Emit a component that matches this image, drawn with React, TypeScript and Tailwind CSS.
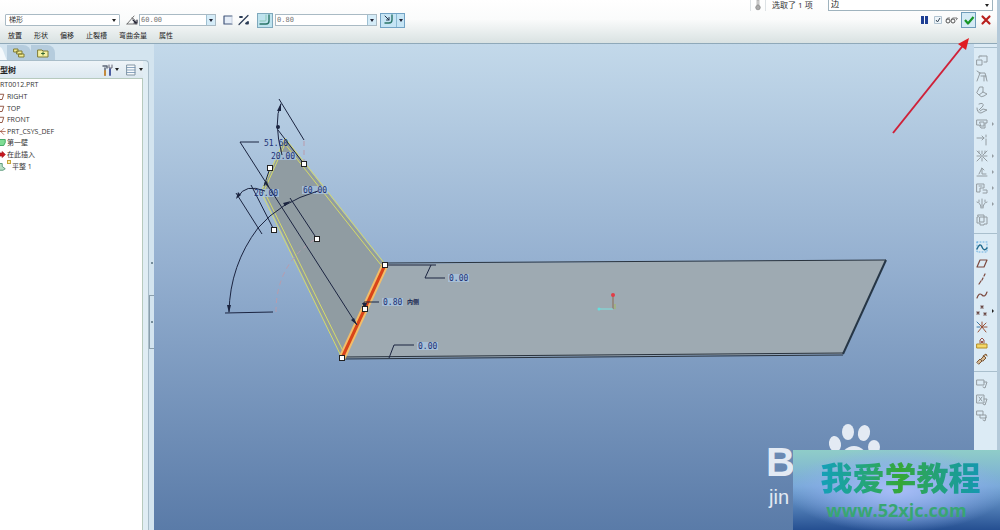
import React, { useState } from 'react';

const ui = "font-['Open_Sans','Noto_Sans_CJK_SC',sans-serif]";

interface IconProps {
  children: React.ReactNode;
  className?: string;
  size?: number;
}

// All the tool glyphs are drawn on a 12 unit grid
const Glyph: React.FC<IconProps> = ({ children, className = '', size = 12 }) => (
  <svg
    width={size}
    height={size}
    viewBox="0 0 12 12"
    fill="none"
    stroke="currentColor"
    strokeLinecap="round"
    strokeLinejoin="round"
    className={`shrink-0 ${className}`}
    aria-hidden="true"
  >
    {children}
  </svg>
);

const Caret = ({ className = '' }: { className?: string }) => (
  <svg width="4" height="3" viewBox="0 0 4 3" className={`shrink-0 ${className}`} aria-hidden="true">
    <path d="M0 0h4L2 3z" fill="currentColor" />
  </svg>
);

interface ComboProps {
  label: string;
  value: string;
  onChange: (value: string) => void;
  className: string;
}

const Combo: React.FC<ComboProps> = ({ label, value, onChange, className }) => (
  <div className={`flex h-3 border border-[#a9bac4] bg-white ${className}`}>
    <input
      aria-label={label}
      value={value}
      onChange={(e) => onChange(e.target.value)}
      className="min-w-0 flex-1 px-px font-['DejaVu_Sans_Mono',monospace] text-[7px] leading-[10px] text-[#777] outline-none"
    />
    <button aria-label={`${label} list`} className="flex w-[9px] items-center justify-center border-l border-[#9fc0d2] bg-[#d5ecf8] text-[#223]">
      <Caret />
    </button>
  </div>
);

const StatusRow = () => {
  const [filter, setFilter] = useState('边');
  return (
    <div className="flex h-[11px] items-end justify-end overflow-hidden pr-1">
      <span className="mr-1 h-[11px] w-px bg-[#dde2e5]" />
      <svg width="6" height="11" viewBox="0 0 6 11" className="mr-1" aria-hidden="true">
        <path d="M2 0h2v5H2z" fill="#ddd" stroke="#999" strokeWidth=".6" />
        <circle cx="3" cy="7.5" r="2.3" fill="#aaa" stroke="#777" strokeWidth=".6" />
      </svg>
      <span className="mr-1.5 h-[11px] w-px bg-[#dde2e5]" />
      <span className="w-14 whitespace-nowrap text-[8px] leading-3 text-[#333]">选取了 1 项</span>
      <div className="relative flex w-[165px] items-center">
        <select
          aria-label="选取过滤器"
          value={filter}
          onChange={(e) => setFilter(e.target.value)}
          className="h-3.5 w-full appearance-none border border-[#9fb3be] bg-white px-0.5 text-[8px] leading-3 text-[#222] outline-none"
        >
          <option>边</option>
          <option>面</option>
        </select>
        <Caret className="pointer-events-none absolute right-1 bottom-1 text-[#222]" />
      </div>
    </div>
  );
};

const Dashboard = () => {
  const [shape, setShape] = useState('梯形');
  const [angle, setAngle] = useState('60.00');
  const [radius, setRadius] = useState('0.80');
  const [preview, setPreview] = useState(true);

  return (
    <div className="flex h-[18px] items-center pr-[5px] pl-[5px]">
      <div className="relative flex w-[115px] items-center">
        <select
          aria-label="形状"
          value={shape}
          onChange={(e) => setShape(e.target.value)}
          className="h-3 w-full appearance-none rounded-[1px] border border-[#a9bac4] bg-white px-[3px] text-[7px] leading-[10px] text-[#333] outline-none"
        >
          <option>梯形</option>
          <option>矩形</option>
        </select>
        <Caret className="pointer-events-none absolute right-1 text-[#222]" />
      </div>
      <Glyph className="ml-1.5 text-[#555]">
        <path d="M1 10h10M1 10 8 2M6 4q4 1 4 6" strokeWidth=".8" />
        <path d="m7 6 3 3M8 9h3V6" stroke="#223" strokeWidth="1.2" />
      </Glyph>
      <Combo label="角度" value={angle} onChange={setAngle} className="ml-px w-[77px]" />
      <button aria-label="草绘" className="ml-1.5">
        <Glyph className="text-[#44587c]"><path d="M10 2H2v8h8" fill="#e5edf7" strokeWidth="1.2" /><path d="M10 3v6" stroke="#c4cddd" /></Glyph>
      </button>
      <button aria-label="反向" className="ml-1">
        <Glyph className="text-[#2b3c55]"><path d="m1 10.500 9-9" strokeWidth="1.200" /><path d="M2 3h2M8 9.500h2V8z" strokeWidth="1.800" /></Glyph>
      </button>
      <button aria-label="折弯半径" className="ml-[7px] flex h-[15px] w-4 items-center justify-center border border-[#7fa9bd] bg-[#bfe3ee]">
        <Glyph className="text-[#2b7568]"><path d="M10 1v6q0 3-3 3H1" strokeWidth="1.400" /><path d="M7 1v5q0 1-1 1H1" stroke="#8ac9b6" /></Glyph>
      </button>
      <Combo label="半径" value={radius} onChange={setRadius} className="ml-0.5 w-[102px]" />
      <div className="ml-[3px] flex h-[15px] border border-[#72a3c5] bg-[#c6e5f5] text-[#223]">
        <button aria-label="内侧半径" className="flex w-[15px] items-center justify-center">
          <Glyph className="text-[#2b7568]"><path d="M9 1v5q0 3-3 3H2" strokeWidth="1.400" /><path d="m2 2 4 4M3.500 6H6V3.500" stroke="#22334a" /></Glyph>
        </button>
        <button aria-label="内侧半径 list" className="flex w-2 items-center justify-center border-l border-[#8bbad3]"><Caret /></button>
      </div>

      <div className="ml-auto flex items-center">
        <button aria-label="暂停" className="mr-1.5 flex h-2 gap-px">
          <span className="w-[3px] bg-[#1e3f94]" />
          <span className="w-[3px] bg-[#1e3f94]" />
        </button>
        <label className="mr-[3px] flex items-center gap-[3px]">
          <input type="checkbox" checked={preview} onChange={(e) => setPreview(e.target.checked)} aria-label="预览" className="peer sr-only" />
          <svg width="8" height="8" viewBox="0 0 8 8" fill="none" aria-hidden="true">
            <path d="M.5.5h7v7h-7z" fill="#eef5fa" stroke="#b1c3d0" />
            {preview && <path d="m2 4 1.500 2L6 2" stroke="#345" />}
          </svg>
          <svg width="13" height="8" viewBox="0 0 13 8" fill="none" stroke="#555" aria-hidden="true">
            <circle cx="3" cy="5" r="2" />
            <circle cx="8" cy="5" r="2" />
            <path d="M1 4q1-3 4-2M6 4q1-3 4-2l2 0q1 1-1 2" strokeWidth=".8" />
          </svg>
        </label>
        <button aria-label="确定" className="flex h-4 w-[15px] items-center justify-center border border-[#6f9cba] bg-[#d4eaf5]">
          <Glyph><path d="m2 6 3 3.500L10.500 3" stroke="#179527" strokeWidth="2.200" strokeLinecap="butt" /></Glyph>
        </button>
        <button aria-label="取消" className="ml-1">
          <Glyph><path d="m2.500 2.500 7 7M9.500 2.500l-7 7" stroke="#b81f1c" strokeWidth="2.200" /></Glyph>
        </button>
      </div>
    </div>
  );
};

const menu = ['放置', '形状', '偏移', '止裂槽', '弯曲余量', '属性'];

const Plane = () => <path d="M1 9.500 3 3h6L7 9.500z" stroke="#8a4a35" strokeWidth="1.200" />;

const tree = [
  { label: 'RIGHT', icon: <Plane /> },
  { label: 'TOP', icon: <Plane /> },
  { label: 'FRONT', icon: <Plane /> },
  { label: 'PRT_CSYS_DEF', icon: <path d="M5 6h6M5 6l4-4M5 6l4 4M5 6 2 3" stroke="#a2533f" /> },
  { label: '第一壁', icon: <path d="M2 2h9v4l-2 4H4z" fill="#7fdc94" stroke="#22954a" /> },
  { label: '在此插入', icon: <path d="M4 4h3V2l4 4-4 4V8H4z" fill="#c8171f" stroke="#a51218" /> },
  { label: '平整 1', icon: <path d="M3 2h4v4l4 3-3 2H3l-1-3z" fill="#b7dec4" stroke="#3c8462" />, isNew: true },
];

const ModelTree = () => (
  <aside className="flex w-[154px] shrink-0 bg-[#d3e4ef]">
    <div className="flex min-w-0 flex-1 flex-col">
      <div className="flex h-4 items-end bg-[#d3e4ef]">
        <svg width="7" height="15" viewBox="0 0 7 15" aria-hidden="true"><path d="M0 2q2 0 4 6t3 7H0z" fill="#f4f9fc" /></svg>
        <button aria-label="文件夹浏览器" className="flex h-[15px] w-6 items-center justify-center rounded-tr-lg bg-[#b5ccdd]">
          <Glyph><path d="M1 2h4v3H1zM4 4h5v3H4zM6 7h5v3H6z" fill="#f4ed91" stroke="#817c35" /></Glyph>
        </button>
        <button aria-label="收藏夹" className="flex h-[15px] w-6 items-center justify-center rounded-tr-lg bg-[#b5ccdd]">
          <Glyph><path d="M1 3h4l1 1h5v6H1z" fill="#f5f0a0" stroke="#817c35" /><path d="M6 5v3M4.500 6.500h3" stroke="#363" /></Glyph>
        </button>
      </div>
      <div className="flex flex-1 flex-col rounded-tr-sm border-t border-r border-[#a9bdc9] bg-[#e0edf4] pr-[5px]">
        <div className="flex h-[17px] items-center bg-linear-to-b from-[#eef4f8] to-[#dce8f0]">
          <h2 className="text-[8px] leading-3 font-bold text-[#222]">型树</h2>
          <button aria-label="设置" className="ml-auto flex items-center gap-0.5 text-[#222]">
            <Glyph>
              <path d="M2 2h4v2M4 4v7" stroke="#5c6677" strokeWidth="1.500" />
              <path d="M9 5v6" stroke="#4c5da1" strokeWidth="2" />
              <path d="M8 1v3h3V1" stroke="#667" />
              <path d="M4 7v4" stroke="#c48a3c" strokeWidth="2" />
            </Glyph>
            <Caret />
          </button>
          <button aria-label="显示" className="ml-1.5 flex items-center gap-0.5 text-[#222]">
            <Glyph><path d="M2 1h8v10H2z" fill="#f7fafc" stroke="#8294a3" /><path d="M2 3.500h8M2 6h8M2 8.500h8" stroke="#6e8fae" strokeWidth=".8" /></Glyph>
            <Caret />
          </button>
        </div>
        <div className="flex-1 border-t border-r border-[#b7cabd] bg-white">
          <ul className="grid h-[93px] auto-rows-fr text-[7px] leading-[11px] text-[#333]">
            <li>RT0012.PRT</li>
            {tree.map((node) => (
              <li key={node.label} className="flex min-h-0 items-center">
                <span className="flex w-1.5 shrink-0 justify-end overflow-hidden">
                  <Glyph size={9}>{node.icon}</Glyph>
                </span>
                {node.isNew && <span className="ml-px size-1 self-start border border-[#c6a43a] bg-[#fbf2a8]" />}
                <span className="ml-px whitespace-nowrap">{node.label}</span>
              </li>
            ))}
          </ul>
        </div>
      </div>
    </div>
    {/* splitter with its two grips */}
    <div className="flex w-[5px] flex-col">
      <span className="mt-[190px] flex h-[58px] w-[5px] justify-center pt-7">
        <i className="size-0.5 rounded-full bg-[#56707f]" />
      </span>
      <button aria-label="折叠" className="mt-[3px] flex h-[54px] items-center justify-center border-y border-l border-[#8b9fac]">
        <i className="size-0.5 rounded-full bg-[#56707f]" />
      </button>
    </div>
  </aside>
);

const handles = [
  [270, 168], [304, 164], [274, 230], [317, 239], [385, 265], [365, 309], [342, 358],
];

const dims = [
  { x: 264, y: 146, text: '51.60', boxed: false },
  { x: 271, y: 159, text: '20.00', boxed: true },
  { x: 254, y: 196, text: '20.00', boxed: true },
  { x: 303, y: 193, text: '60.00', boxed: true },
  { x: 449, y: 281, text: '0.00', boxed: true },
  { x: 383, y: 305, text: '0.80', boxed: true },
  { x: 418, y: 349, text: '0.00', boxed: true },
];

const Viewport = () => (
  <main className="relative min-w-0 flex-1 overflow-hidden bg-linear-to-b from-[#c3d9ea] via-[#95b0d0] via-45% to-[#5a7ba8]">
    <svg viewBox="154 44 820 486" className="block h-full w-full" role="img" aria-label="PRT0012">
      {/* base wall */}
      <path d="M385 264 886 260 843 354 342 358z" fill="#9eaab2" />
      <path d="M385 263 886 260M342 357 843 353M342 359 843 355" fill="none" stroke="#29333e" strokeWidth="1" />
      <path d="m886 260-43 94" stroke="#263646" strokeWidth="2" />

      {/* flat wall being placed */}
      <path d="M285 139 385 265 342 358 262 191z" fill="#909ca2" />
      <g fill="none" stroke="#d6db67" strokeWidth="1">
        <path d="M342 358 261 192 285 138 385 264" />
        <path d="M344 353 264 191 285 144 381 265" />
      </g>
      <path d="m385 265-43 93" stroke="#f3bd68" strokeWidth="7" />
      <path d="m385 265-43 93" stroke="#d94419" strokeWidth="3" />

      {/* construction arc */}
      <path d="M276 312Q276 265 314 240M304 141v20" fill="none" stroke="#b99cad" strokeWidth="1" strokeDasharray="5 4" />

      {/* boxes behind the boxed values, text on top of the leaders */}
      {dims.filter((d) => d.boxed).map((d) => (
        <rect key={`${d.x}-${d.y}`} x={d.x - 1} y={d.y - 7} width={d.text.length * 5 + 1} height="8" fill="#a9c6e3" opacity=".75" />
      ))}

      <g fill="none" stroke="#1b2440" strokeWidth="1">
        <path d="M259 142h-19L357 325" />
        <path d="m279 99 25 41M281 104Q273 121 282 155M278 130l26 34" />
        <path d="m236 193 26 41M251 185l23 45M238 197Q245 183 265 191" />
        <path d="m270 168-6 18" />
        <path d="M229 312Q230 265 258 228 280 202 318 191" />
        <path d="m225 313 48-1M290 198l27 41" />
        <path d="M385 265h51M431 265l-6 13h20" />
        <path d="M389 358l5-13h20" />
        <path d="M364 309v-7h15" />
      </g>
      <g fill="#1b2440">
        <path d="m357 325-6-5 3-2zM269 188l-5-5 3-2zM229 313l-2-8h4zM291 201l-8 2 2 3zM281 103l-4 8h4zM365 309l-3-6h5zM236 199l2-7 3 3z" />
        <circle cx="278" cy="127" r="2" />
      </g>

      <g fill="#1c3275" fontFamily="'DejaVu Sans Mono', monospace" fontSize="8">
        {dims.map((d) => (
          <text key={`${d.x}-${d.y}`} x={d.x} y={d.y}>{d.text}</text>
        ))}
      </g>
      <text x="407" y="304" fontFamily="'Noto Sans CJK SC', sans-serif" fontSize="6" fontWeight="bold" fill="#15224e">内侧</text>

      <g fill="#fff" stroke="#222" strokeWidth="1">
        {handles.map(([x, y]) => (
          <rect key={`${x}-${y}`} x={x - 2.5} y={y - 2.5} width="5" height="5" />
        ))}
      </g>

      {/* spin centre */}
      <path d="M613 296v13" stroke="#8a6a51" />
      <path d="M600 309h13" stroke="#7fe3e0" />
      <path d="M615 304v5" stroke="#a3bb5f" />
      <circle cx="613" cy="295" r="2" fill="#e23c46" />
      <circle cx="599" cy="309" r="1.500" fill="#63e0df" />

      <g fill="#e3eaf3">
        <ellipse cx="848" cy="432" rx="6" ry="8" />
        <ellipse cx="864" cy="433" rx="6" ry="8" transform="rotate(12 864 433)" />
        <ellipse cx="835" cy="444" rx="6" ry="8" transform="rotate(-10 835 444)" />
        <ellipse cx="874" cy="447" rx="6" ry="7" />
        <ellipse cx="854" cy="459" rx="13" ry="13" />
        <text x="766" y="476" fontFamily="'Liberation Sans', sans-serif" fontSize="40" fontWeight="bold">B</text>
        <text x="769" y="504" fontFamily="'Liberation Sans', sans-serif" fontSize="20">jin</text>
      </g>
    </svg>
  </main>
);

interface Tool {
  name: string;
  icon: React.ReactNode;
  more?: boolean;
}

const wallTools: Tool[] = [
  { name: '转换', icon: <path d="M1 6h5v5H1zM5 2h6v6H8M3 4V2h2" /> },
  { name: '平整', icon: <path d="M3 3h6l1 4M4 3l-3 8M5 6h5M8 6v5M11 11l-1-4M1 1l3 2" /> },
  { name: '法兰', icon: <path d="M4 1h3v5L3 9 1 7zM3 9q2 3 5 1l3-2-4-2" /> },
  { name: '延伸', icon: <path d="M3 2q5-2 4 2L3 8M1 6q0 5 4 5l6-3-4-1-3 2" /> },
  { name: '合并', icon: <path d="M1 2h10v3H9v5H5L3 7H1zM4 4h4v4H5z" />, more: true },
  { name: '止裂', icon: <path d="M1 4h7M6 2l2 2-2 2M10 5v6M10 1v2" /> },
  { name: '折弯', icon: <path d="m1 1 4 4M11 1 7 5M1 11l4-4M11 11 7 7M6 1v3M1 6h10M6 8v3M3 1v2M9 1v2" />, more: true },
  { name: '展平', icon: <path d="M1 10h10M3 8l3-6v6h4M6 2l2 2" />, more: true },
  { name: '凹槽', icon: <path d="M1 2h7v4H4v4H1zM7 8h4v3H7M3 4h3" />, more: true },
  { name: '成形', icon: <path d="M6 1v9M1 4q4 1 4 6M11 4q-4 1-4 6M3 2v2M9 2v2" />, more: true },
  { name: '平整形态', icon: <path d="M2 1h6v2h3v7H8v1H4V9H1V3h1zM4 3h4v5H4z" /> },
];

const datumTools: Tool[] = [
  { name: '草绘工具', icon: <><path d="M1 1h10v10H1z" stroke="#68aee0" strokeDasharray="1 2" /><path d="M1 8q3-7 5-2t5 1" stroke="#236b8d" strokeWidth="1.400" /></> },
  { name: '平面', icon: <path d="M1 10 4 3h7L8 10z" stroke="#7b483e" strokeWidth="1.200" /> },
  { name: '轴', icon: <path d="m3 11 2-3M6 7l1-2M8 3l1-2" stroke="#7b483e" strokeWidth="1.200" /> },
  { name: '曲线', icon: <path d="M1 9q2-6 5-3t5-3" stroke="#7b483e" strokeWidth="1.200" /> },
  { name: '点', icon: <path d="m5 1 2 2M7 1 5 3M1 7l2 2M3 7 1 9M8 8l2 2M10 8l-2 2" stroke="#684642" strokeWidth="1.200" />, more: true },
  { name: '坐标系', icon: <><path d="M6 6h5M6 6 2 11M6 6l4 5M6 6 2 2M6 6l4-4M6 6V1" stroke="#99543b" /><path d="m1 1 2 2M1 6h3" stroke="#3978a8" /></> },
  { name: '分析', icon: <><path d="M1 7h10v4H1z" fill="#f4d768" stroke="#b28c27" /><path d="M4 6V3l2-2 2 2v3M5 4l2 2M7 4 5 6" stroke="#99544b" /></> },
  { name: '参照', icon: <path d="M1 9 4 6l2 2-3 3zM5 6l3-3 2 2-3 3zM7 3l3-2 1 2" fill="#d6b992" stroke="#7b5736" /> },
];

const noteTools: Tool[] = [
  { name: '注释', icon: <path d="M1 2h7v5H1zM8 4h3L9 10 7 9" /> },
  { name: '注释元素', icon: <path d="M1 1h7v8H1zM3 3l3 4M6 3 3 7M8 5h3L9 11 7 10" /> },
  { name: '传播', icon: <path d="M1 1h6v4H1zM4 5v3h6V5H7M10 7l-1 4-2-1" /> },
];

const ToolGroup = ({ tools, muted }: { tools: Tool[]; muted?: boolean }) => (
  <div className="flex flex-col">
    {tools.map((tool) => (
      <button key={tool.name} aria-label={tool.name} className={`flex h-4 items-center pl-0.5 ${muted ? 'text-[#939ca2]' : 'text-[#222]'}`}>
        <Glyph>{tool.icon}</Glyph>
        {tool.more && (
          <svg width="2" height="4" viewBox="0 0 2 4" className="ml-1" aria-hidden="true"><path d="M0 0v4l2-2z" fill="currentColor" /></svg>
        )}
      </button>
    ))}
  </div>
);

const ToolStrip = () => (
  <nav className="w-[23px] shrink-0 bg-[#dcebf5]">
    <hr className="mt-[3px] mb-1 border-[#a9bfcd]" />
    <ToolGroup tools={wallTools} muted />
    <hr className="my-[5px] border-[#a9bfcd]" />
    <ToolGroup tools={datumTools} />
    <hr className="my-1 border-[#a9bfcd]" />
    <ToolGroup tools={noteTools} muted />
  </nav>
);

const SiteBadge = () => (
  <div className="absolute right-0 bottom-0 flex h-20 w-[207px] flex-col items-center bg-[radial-gradient(ellipse_at_50%_50%,#a8bdf8_0%,#8fb0ee99_45%,transparent_75%),linear-gradient(to_bottom,#8fcdc8_0%,#79a9d8_45%,#254f91_100%)] pt-2">
    <p className="ml-2 bg-linear-to-r from-[#159fba] via-[#35a735] to-[#1597b0] bg-clip-text font-['Noto_Sans_CJK_SC',sans-serif] text-[32px] leading-9 font-black whitespace-nowrap text-transparent">我爱学教程</p>
    <a href="#site" className="font-['Open_Sans',sans-serif] text-[18px] leading-8 font-bold text-[#38a673]">www.52xjc.com</a>
  </div>
);

export default function App() {
  return (
    <div className={`relative flex min-h-screen bg-[#b4c9d9] pr-[3px] ${ui}`}>
      <div className="flex min-w-0 flex-1 flex-col">
        <header className="border-b border-[#8fa9b9] bg-linear-to-b from-white via-[#fafbfb] via-45% to-[#d9e2e2]">
          <StatusRow />
          <Dashboard />
          <nav className="flex h-3.5 items-center gap-3 pl-2 text-[7px] leading-3 text-[#222]">
            {menu.map((item) => (
              <button key={item}>{item}</button>
            ))}
          </nav>
        </header>
        <div className="flex flex-1">
          <ModelTree />
          <Viewport />
          <ToolStrip />
        </div>
      </div>

      {/* pointer to the confirm button */}
      <svg width="80" height="100" viewBox="0 0 80 100" className="pointer-events-none absolute top-9 right-7" aria-hidden="true">
        <path d="M1 97 73 7" stroke="#cf2038" strokeWidth="2" />
        <path d="M77 2 74 14 66 8z" fill="#e01c22" />
      </svg>
      <SiteBadge />
    </div>
  );
}
